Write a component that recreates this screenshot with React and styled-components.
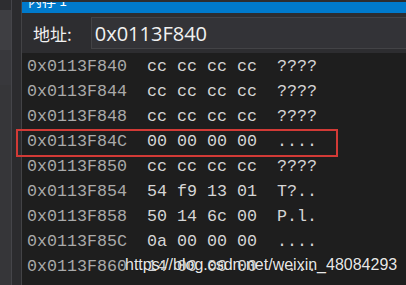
import React from 'react';
import styled, { createGlobalStyle } from 'styled-components';

const rows = [
  ['0x0113F840', 'cc cc cc cc', '????'],
  ['0x0113F844', 'cc cc cc cc', '????'],
  ['0x0113F848', 'cc cc cc cc', '????'],
  ['0x0113F84C', '00 00 00 00', '....'],
  ['0x0113F850', 'cc cc cc cc', '????'],
  ['0x0113F854', '54 f9 13 01', 'T?..'],
  ['0x0113F858', '50 14 6c 00', 'P.l.'],
  ['0x0113F85C', '0a 00 00 00', '....'],
  ['0x0113F860', '14 00 00 00', '....'],
  ['0x0113F864', '0a 00 00 00', '....']
];

const Global = createGlobalStyle`
  html, body {
    margin: 0;
    padding: 0;
    background: #1e1e1e;
    overflow: hidden;
  }
`;

const Screen = styled.div`
    position: relative;
    display: flex;
    width: 406px;
    height: 285px;
    overflow: hidden;
    background: #1e1e1e;
  `,
  Rail = styled.div`
    display: flex;
    flex: 0 0 22px;
    background: #2b2b2e;
    border-right: 1px solid #434346;
    box-sizing: border-box;
  `,
  RailPane = styled.div`
    display: flex;
    flex-direction: column;
    width: 11px;
    background: #363639;
    border-right: 1px solid #45454a;
  `,
  RailBlock = styled.div`
    flex: 0 0 ${p => p.h}px;
    background: ${p => p.bg};
  `,
  Main = styled.div`
    display: flex;
    flex-direction: column;
    flex: 1;
    min-width: 0;
    padding-top: 2px;
    background: #2d2d30;
  `,
  TitleBar = styled.div`
    flex: 0 0 11px;
    background: #007acc;
    overflow: hidden;
    padding-left: 6px;
    color: #ffffff;
    font: 14px 'Noto Sans CJK SC', 'Noto Sans', sans-serif;
    & > span {
      display: block;
      line-height: 14px;
      margin-top: -9px;
    }
  `,
  AddrBar = styled.div`
    display: flex;
    flex: 0 0 40px;
    align-items: center;
    padding: 4px 0 4px 11px;
    box-sizing: border-box;
    gap: 19px;
  `,
  Label = styled.span`
    font: 17px 'Noto Sans CJK SC', sans-serif;
    color: #f1f1f1;
    line-height: 20px;
    margin-top: 1px;
  `,
  AddrInput = styled.div`
    flex: 1;
    height: 32px;
    display: flex;
    align-items: center;
    padding-left: 3px;
    margin-right: -4px;
    box-sizing: border-box;
    background: #333337;
    border: 1px solid #434346;
    color: #f1f1f1;
    font: 20px 'Open Sans', sans-serif;
  `,
  Memory = styled.div`
    flex: 1;
    min-height: 0;
    overflow: hidden;
    background: #1e1e1e;
    padding: 1px 0 0 5px;
    font-family: 'Liberation Mono', monospace;
    font-size: 16.67px;
  `,
  Row = styled.div`
    display: grid;
    grid-template-columns: 120px 130px auto;
    height: 25px;
    line-height: 25px;
    white-space: pre;
  `,
  Addr = styled.span`
    color: #aaaaaa;
  `,
  Data = styled.span`
    color: #d6d6d6;
  `,
  Highlight = styled.div`
    position: absolute;
    left: 16px;
    top: 129px;
    width: 322px;
    height: 28px;
    border: 2px solid #d23a36;
    box-sizing: border-box;
  `,
  Watermark = styled.div`
    position: absolute;
    left: 125px;
    top: 256px;
    line-height: 22px;
    font: 16px 'Liberation Sans', Arial, sans-serif;
    color: rgba(255, 255, 255, 0.92);
    text-shadow: 0 0 1px rgba(0, 0, 0, 0.6);
  `;

const App = () => (
  <Screen>
    <Global />
    <Rail>
      <RailPane>
        <RailBlock h={10} bg="#2d2d30" />
        <RailBlock h={40} bg="#3e3e42" />
        <RailBlock h={35} bg="#38383c" />
      </RailPane>
    </Rail>
    <Main>
      <TitleBar>
        <span>内存 1</span>
      </TitleBar>
      <AddrBar>
        <Label>地址:</Label>
        <AddrInput>0x0113F840</AddrInput>
      </AddrBar>
      <Memory>
        {rows.map(([addr, bytes, chars]) => (
          <Row key={addr}>
            <Addr>{addr}</Addr>
            <Data>{bytes}</Data>
            <Data>{chars}</Data>
          </Row>
        ))}
      </Memory>
    </Main>
    <Highlight />
    <Watermark>https://blog.csdn.net/weixin_48084293</Watermark>
  </Screen>
);

export default App;
